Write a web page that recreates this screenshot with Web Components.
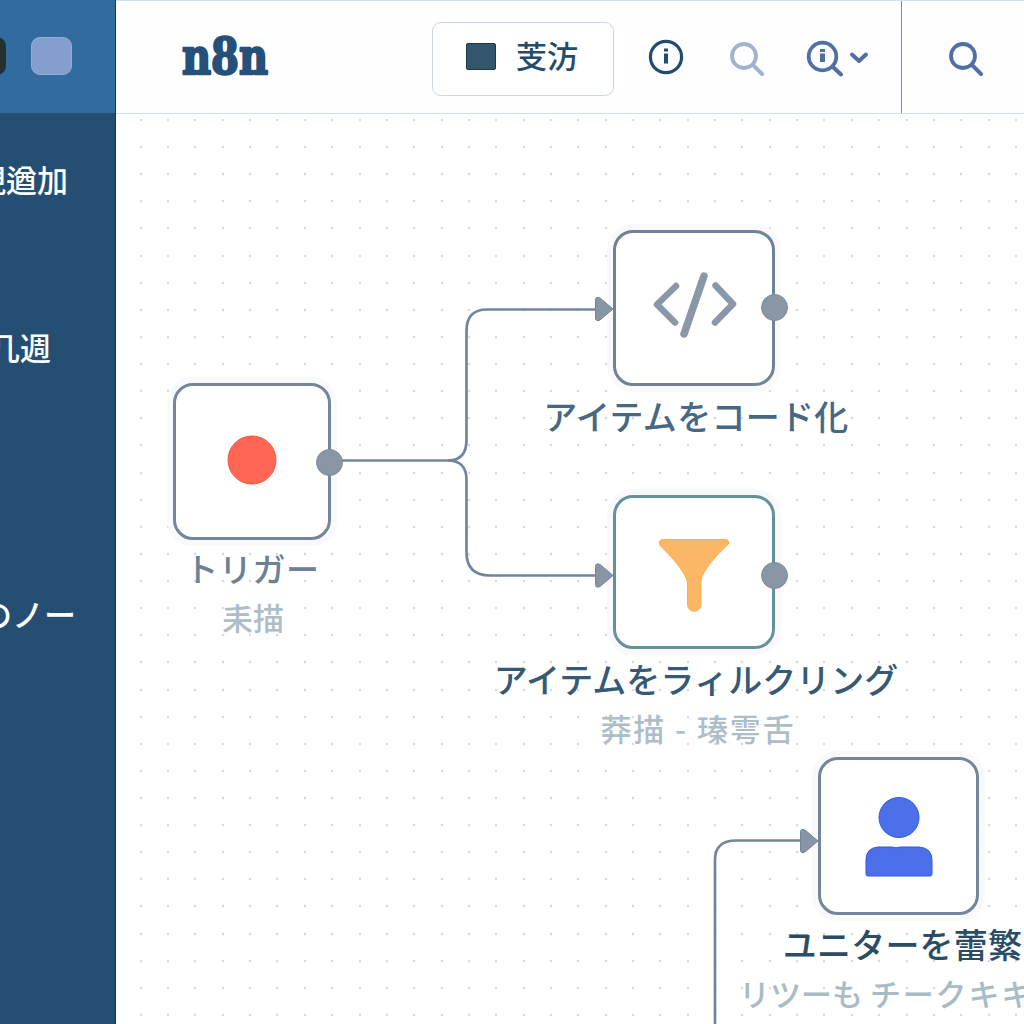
<!DOCTYPE html>
<html lang="ja">
<head>
<meta charset="utf-8">
<title>n8n</title>
<style>
html,body{margin:0;height:100%;overflow:hidden}
body{font-family:"Noto Sans CJK JP",sans-serif;background:#fff}
</style>
</head>
<body>
<n8n-app></n8n-app>
<script>
const define=(name,html,init)=>{
  const t=document.createElement('template');t.innerHTML=html;
  customElements.define(name,class extends HTMLElement{
    connectedCallback(){
      if(this.shadowRoot)return;
      this.attachShadow({mode:'open'}).append(t.content.cloneNode(true));
      if(init)init(this,this.shadowRoot);
    }
  });
};

const ICONS={
  info:['0 0 36 36','<circle cx="18" cy="18" r="15.6" fill="none" stroke="currentColor" stroke-width="3.2"/><path d="M16 9.500h4v3h-4zM16 14.500h4v10h-4z" fill="currentColor"/>'],
  search:['0 0 36 36','<circle cx="15" cy="15" r="12" fill="none" stroke="currentColor" stroke-width="3.8"/><path d="M24.2 24.2 33 33" stroke="currentColor" stroke-width="4" stroke-linecap="round"/>'],
  inspect:['0 0 38 37','<circle cx="16.5" cy="16.5" r="13.8" fill="none" stroke="currentColor" stroke-width="3.8"/><path d="M27 27 35 34.5" stroke="currentColor" stroke-width="4" stroke-linecap="round"/><path d="M14 9h5v3h-5zM14 13.5h5v8.5h-5z" fill="currentColor"/>'],
  chevron:['0 0 20 14','<path d="M3 3.5 10 10 17 3.5" fill="none" stroke="currentColor" stroke-width="4" stroke-linecap="round" stroke-linejoin="round"/>'],
  record:['0 0 50 50','<circle cx="25" cy="25" r="24" fill="#ff6653" stroke="#ff523b"/>'],
  code:['0 0 84 66','<g fill="none" stroke="#8a97a6" stroke-width="6.5" stroke-linecap="round" stroke-linejoin="round"><path d="M23 14 4 32.5 22 50.5"/><path d="M62.5 13.5 80 32 62 50.5"/></g><path d="M51 4 31 62" stroke="#8a97a6" stroke-width="7.5" stroke-linecap="round"/>'],
  filter:['0 0 72 74','<path d="M4.500 1.500H67.500Q71 1.500 70.500 6C62 14 43 33 43 44V66.500a6.500 6.500 0 0 1-13.500 0V44C28 34 10 15 2 7.500Q0 2 4.500 1.500Z" fill="#fbb765" stroke="#f9ad4f"/>'],
  user:['0 0 68 82','<g fill="#4c70e9" stroke="#3158e3"><circle cx="34" cy="21.500" r="20"/><path d="M13 51H27Q31 52.500 35 51H54Q67 52 67 64V78Q67 80 65 80H3Q1 80 1 78V64Q1 52 13 51Z"/></g>']
};
define('ui-icon','<style>:host{display:block;flex:none}svg{display:block;width:100%;height:100%}</style><svg></svg>',(h,r)=>{
  const [box,body]=ICONS[h.getAttribute('name')];
  const s=r.querySelector('svg');s.setAttribute('viewBox',box);s.innerHTML=body;
});

define('app-logo',`<style>:host{display:block;flex:none;width:90px;height:46px;color:#24507a}svg{display:block}
text{font:bold 50px "DejaVu Serif",serif;fill:currentColor;stroke:currentColor;stroke-width:2.4;stroke-linejoin:round}</style>
<svg width="90" height="46"><text x="1" y="39.500" textLength="86" lengthAdjust="spacingAndGlyphs">n8n</text></svg>`);

define('run-button',`<style>:host{display:flex;box-sizing:border-box;flex:none;align-items:center;width:182px;height:74px;border:1.5px solid #cbd6e7;border-radius:9px;background:#fff;padding-left:33px;gap:20px;color:#244c68;font-size:31px;font-weight:500;line-height:40px}
i{width:30px;height:27px;box-sizing:border-box;border:1px solid #19384e;border-radius:2px;background:#34566c;margin-top:-5px}span{margin-top:-8px}</style><i></i><span><slot></slot></span>`);

define('top-bar',`<style>:host{display:flex;box-sizing:border-box;background:#fefdff;border-top:1px solid #cfe2f5;border-bottom:1px solid #cfdcea}
.main{display:flex;align-items:center;width:786px;box-sizing:border-box;border-right:1.500px solid #7291b7;padding-left:65px}
run-button{margin-left:161px;margin-top:4px}
.info{width:36px;height:36px;margin-left:34px;margin-top:-1px;color:#224b73}
.find{width:36px;height:36px;margin-left:45px;margin-top:3px;color:#a2b2d2}
.inspect{width:38px;height:37px;margin-left:41px;margin-top:2px;color:#506fa5}
.chev{width:20px;height:14px;margin-left:5px;margin-top:1px;color:#506fa5}
.side{display:flex;align-items:center;padding-left:46px}.side ui-icon{width:36px;height:36px;margin-top:4px;color:#506fa5}</style>
<div class="main"><app-logo></app-logo><run-button>芰汸</run-button><ui-icon class="info" name="info"></ui-icon><ui-icon class="find" name="search"></ui-icon><ui-icon class="inspect" name="inspect"></ui-icon><ui-icon class="chev" name="chevron"></ui-icon></div>
<div class="side"><ui-icon name="search"></ui-icon></div>`);

define('side-bar',`<style>:host{display:flex;flex-direction:column;box-sizing:border-box;border-right:1px solid #103661;background:#244f72;color:#fff;overflow:hidden}
.head{height:113px;flex:none;display:flex;align-items:center;background:#326b9f;gap:25px}
.head b{width:41px;height:38px;margin-top:-1px;box-sizing:border-box;border-radius:9px;background:#849fcd;border:1px solid #91add7}
.head b:first-child{background:#26302f;border-color:#1d3440;margin-left:-35px}
nav{display:flex;flex-direction:column;align-items:flex-end;font-size:31px;font-weight:500;line-height:40px;white-space:nowrap}
nav span:nth-child(1){margin:46px 47px 0 0}nav span:nth-child(2){margin:128px 64px 0 0}nav span:nth-child(3){margin:226px 39px 0 0;font-size:32px}</style>
<div class="head"><b></b><b></b></div><nav><span>現遒加</span><span>几週</span><span>のノー</span></nav>`);

define('flow-node',`<style>:host{position:absolute;display:flex;flex-direction:column;align-items:center;--line:#73859a}
.box{position:relative;flex:none;box-sizing:border-box;width:100%;height:var(--h);border:3px solid var(--line);border-radius:20px;background:#fff;box-shadow:0 0 0 6px #f9f8fa;display:flex;align-items:center;justify-content:center}
.port{position:absolute;right:var(--pr,-16px);top:var(--port);width:27px;height:27px;box-sizing:border-box;border-radius:50%;background:#8997a5;border:1px solid #7b8b9d}
:host([noport]) .port{display:none}
::slotted(*){white-space:nowrap}</style>
<div class="box"><slot name="icon"></slot><div class="port"></div></div><slot></slot>`);

define('node-text',`<style>:host{display:block;flex:none;line-height:50px;font-size:34px;font-weight:500;color:#466883}
:host([sub]){color:#adbec8;font-size:31px}</style><slot></slot>`);

define('dot-grid','<style>:host{display:block;position:absolute;inset:0}svg{display:block;width:100%;height:100%}</style><svg fill="#d9d7ea"></svg>',(h,r)=>{
  let s='';
  for(let j=0;j<34;j++)for(let i=0;i<33;i++)
    s+=`<circle cx="${Math.round(24.7+i*27.35)}" cy="${Math.round(7+j*27.12)}" r="1.25"/>`;
  r.querySelector('svg').innerHTML=s;
});

define('flow-canvas',`<style>:host{display:block;position:relative;overflow:hidden;background:#fff}
.wires{position:absolute;left:0;top:0}
.trigger{left:57px;top:270px;width:158px;--h:157px;--port:63px;--pr:-15px}
.code{left:497px;top:117px;width:162px;--h:156px;--port:61px;--line:#708297}
.filter{left:497px;top:382px;width:162px;--h:154px;--port:64px;--line:#639299}
.user{left:702px;top:644px;width:161px;--h:158px}
.trigger ui-icon{width:50px;height:50px;margin-top:-3px;margin-right:1px}
.code ui-icon{width:84px;height:66px;margin-top:-6px;margin-left:2px}
.filter ui-icon{width:72px;height:74px;margin-top:6px}
.user ui-icon{width:68px;height:82px;margin-top:1px}
.trigger .t{font-size:33px;margin:3px 0 0 1px;color:#6e8093;letter-spacing:.6px}
.trigger .s{margin:-1px 0 0 2px}
.code .t{margin:5px 0 0 4px;letter-spacing:.3px}
.filter .t{margin:5px 0 0 4px;color:#365974}
.filter .s{margin:-1px 0 0 8px;letter-spacing:1.900px}
.user .t{margin:4px 0 0 8px;color:#2a4c64;letter-spacing:.2px}
.user .s{align-self:flex-start;margin:-1px 0 0 -79px;color:#a7bcc5}
.user .s b{font-weight:inherit;letter-spacing:1.800px}</style>
<dot-grid></dot-grid>
<flow-node class="trigger"><ui-icon slot="icon" name="record"></ui-icon><node-text class="t">トリガー</node-text><node-text sub class="s">耒描</node-text></flow-node>
<flow-node class="code"><ui-icon slot="icon" name="code"></ui-icon><node-text class="t">アイテムをコード化</node-text></flow-node>
<flow-node class="filter"><ui-icon slot="icon" name="filter"></ui-icon><node-text class="t">アイテムをラィルクリング</node-text><node-text sub class="s">莽描 - 瑧雩舌</node-text></flow-node>
<flow-node class="user" noport><ui-icon slot="icon" name="user"></ui-icon><node-text class="t">ユニターを蕾繁</node-text><node-text sub class="s">リツーも <b>チークキキ</b></node-text></flow-node>
<svg class="wires" width="908" height="911" viewBox="116 113 908 911">
<g fill="none" stroke="#748599" stroke-width="2.700"><path d="M342 460.500H448Q466.500 460.500 466.500 440V331Q466.500 309.500 487 309.500H597"/><path d="M448 460.500Q466.500 460.500 466.500 480V552Q466.500 575.500 490 575.500H597"/><path d="M715 1024V860Q715 840.500 736 840.500H802"/></g>
<g fill="#8795a5" stroke="#73859a" stroke-linejoin="round"><path d="M595.500 300Q595.500 296 600 298L613 309 600 320Q595.500 322 595.500 318Z"/><path transform="translate(0 266.500)" d="M595.500 300Q595.500 296 600 298L613 309 600 320Q595.500 322 595.500 318Z"/><path transform="translate(205 532)" d="M595.500 300Q595.500 296 600 298L613 309 600 320Q595.500 322 595.500 318Z"/></g></svg>`);

define('n8n-app',`<style>:host{display:grid;width:1024px;height:1024px;grid-template:113px 1fr/116px 1fr;overflow:hidden}
side-bar{grid-row:1/3}top-bar{height:114px;z-index:1}</style><side-bar></side-bar><top-bar></top-bar><flow-canvas></flow-canvas>`);
</script>
</body>
</html>
